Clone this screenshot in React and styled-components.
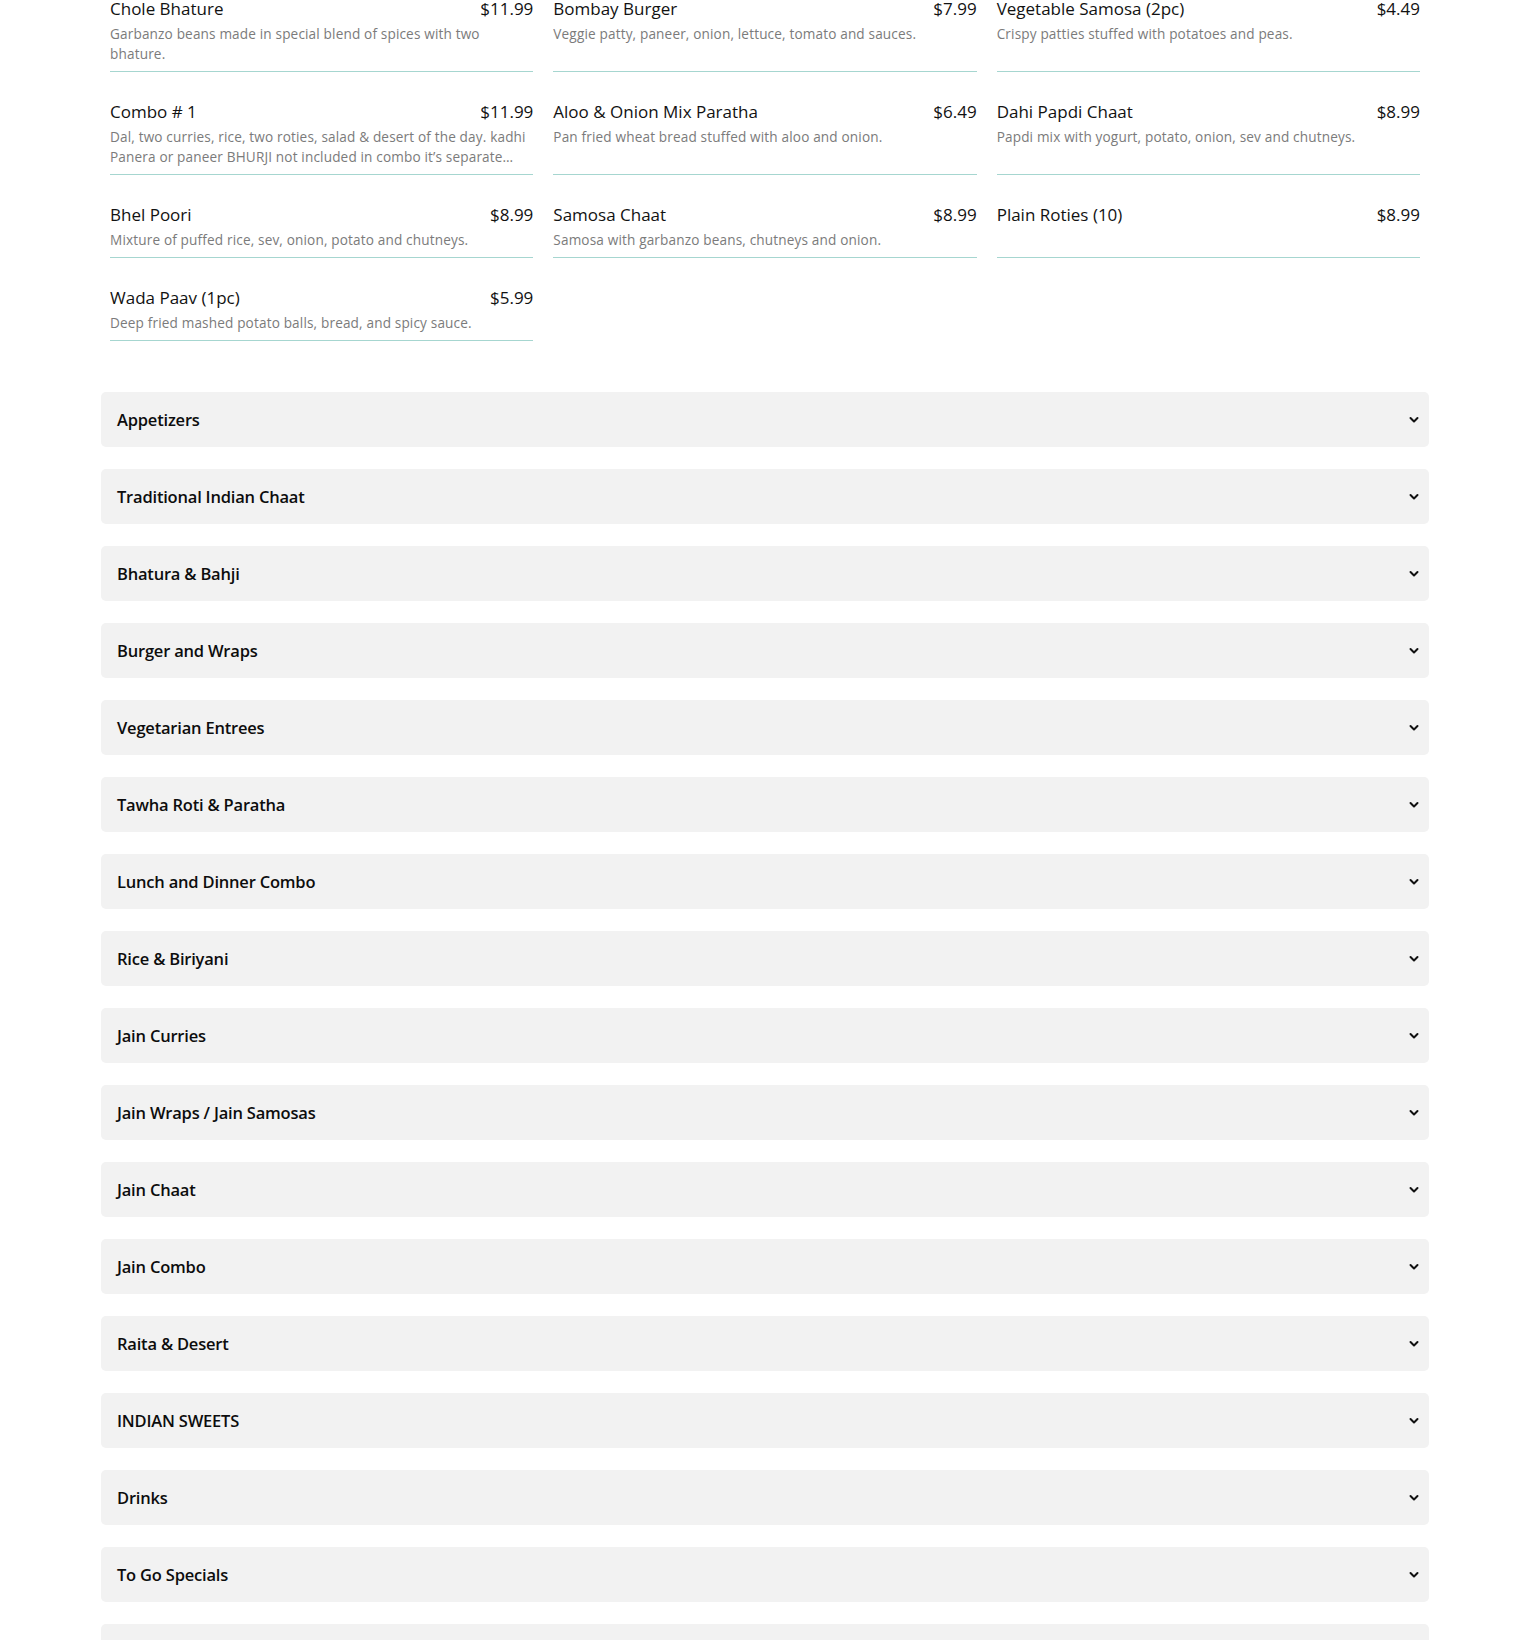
import React from 'react';
import styled, { createGlobalStyle } from 'styled-components';

const GlobalStyle = createGlobalStyle`
	html, body {
		margin: 0;
		padding: 0;
		background: #ffffff;
	}
	body {
		font-family: "Open Sans", "Noto Sans", sans-serif;
		color: #111111;
	}
	* {
		box-sizing: border-box;
	}
`;

const Page = styled.div`
	width: 1328px;
	margin: -3px auto 0;
	padding-bottom: 40px;
`;

const MenuGrid = styled.div`
	width: 1310px;
	margin: 0 auto;
	display: grid;
	grid-template-columns: repeat(3, 1fr);
	column-gap: 20px;
	row-gap: 28px;
`;

const Item = styled.div`
	display: flex;
	flex-direction: column;
	padding-bottom: 7px;
	border-bottom: 1px solid #a6d6d0;
`;

const ItemHead = styled.div`
	display: flex;
	justify-content: space-between;
	align-items: center;
	height: 24px;
	font-size: 17px;
	line-height: 24px;
	color: #121212;
`;

const ItemName = styled.span``;
const ItemPrice = styled.span``;

const ItemDesc = styled.p`
	margin: 3px 0 0;
	font-size: 13.6px;
	letter-spacing: 0.15px;
	line-height: 20px;
	color: #7b7b7b;
	min-height: ${p => (p.$empty ? '20px' : '0')};
	display: -webkit-box;
	-webkit-line-clamp: 2;
	-webkit-box-orient: vertical;
	overflow: hidden;
`;

const Categories = styled.div`
	margin-top: 51px;
	display: flex;
	flex-direction: column;
	gap: 22px;
`;

const Category = styled.button`
	display: flex;
	align-items: center;
	justify-content: space-between;
	width: 100%;
	height: 55px;
	padding: 0 10px 0 16px;
	border: none;
	border-radius: 5px;
	background: #f2f2f2;
	font-family: "Open Sans", "Noto Sans", sans-serif;
	font-size: 16.5px;
	font-weight: 600;
	letter-spacing: -0.2px;
	color: #0d0d0d;
	text-align: left;
	cursor: pointer;
`;

const Chevron = styled.svg`
	width: 10px;
	height: 8px;
	flex-shrink: 0;
`;

const items = [
	{ name: 'Chole Bhature', price: '$11.99', desc: 'Garbanzo beans made in special blend of spices with two bhature.' },
	{ name: 'Bombay Burger', price: '$7.99', desc: 'Veggie patty, paneer, onion, lettuce, tomato and sauces.' },
	{ name: 'Vegetable Samosa (2pc)', price: '$4.49', desc: 'Crispy patties stuffed with potatoes and peas.' },
	{ name: 'Combo # 1', price: '$11.99', desc: 'Dal, two curries, rice, two roties, salad & desert of the day. kadhi Panera or paneer BHURJI not included in combo it\u2019s separate\u2026' },
	{ name: 'Aloo & Onion Mix Paratha', price: '$6.49', desc: 'Pan fried wheat bread stuffed with aloo and onion.' },
	{ name: 'Dahi Papdi Chaat', price: '$8.99', desc: 'Papdi mix with yogurt, potato, onion, sev and chutneys.' },
	{ name: 'Bhel Poori', price: '$8.99', desc: 'Mixture of puffed rice, sev, onion, potato and chutneys.' },
	{ name: 'Samosa Chaat', price: '$8.99', desc: 'Samosa with garbanzo beans, chutneys and onion.' },
	{ name: 'Plain Roties (10)', price: '$8.99', desc: '' },
	{ name: 'Wada Paav (1pc)', price: '$5.99', desc: 'Deep fried mashed potato balls, bread, and spicy sauce.' },
];

const categories = [
	'Appetizers',
	'Traditional Indian Chaat',
	'Bhatura & Bahji',
	'Burger and Wraps',
	'Vegetarian Entrees',
	'Tawha Roti & Paratha',
	'Lunch and Dinner Combo',
	'Rice & Biriyani',
	'Jain Curries',
	'Jain Wraps / Jain Samosas',
	'Jain Chaat',
	'Jain Combo',
	'Raita & Desert',
	'INDIAN SWEETS',
	'Drinks',
	'To Go Specials',
	'Catering',
];

function App() {
	return (
		<>
			<GlobalStyle />
			<Page>
				<MenuGrid>
					{items.map(item => (
						<Item key={item.name}>
							<ItemHead>
								<ItemName>{item.name}</ItemName>
								<ItemPrice>{item.price}</ItemPrice>
							</ItemHead>
							<ItemDesc $empty={!item.desc}>{item.desc}</ItemDesc>
						</Item>
					))}
				</MenuGrid>

				<Categories>
					{categories.map(cat => (
						<Category key={cat} type="button">
							<span>{cat}</span>
							<Chevron viewBox="0 0 10 8">
								<polyline points="1.5,2 5,5.5 8.5,2" fill="none" stroke="#111" strokeWidth="2" strokeLinecap="round" strokeLinejoin="round" />
							</Chevron>
						</Category>
					))}
				</Categories>
			</Page>
		</>
	);
}

export default App;
